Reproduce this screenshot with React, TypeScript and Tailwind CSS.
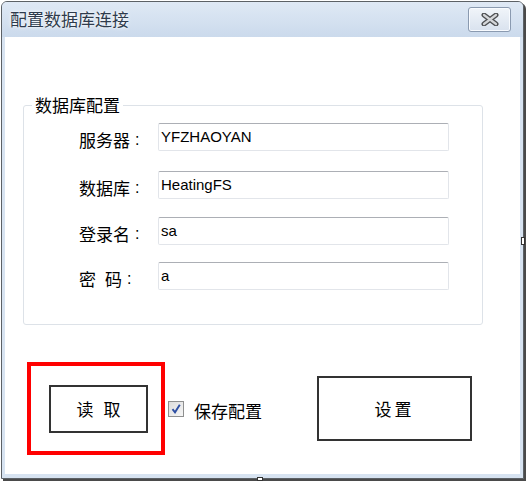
import React from "react";

const cjk = { fontFamily: '"Noto Sans CJK SC", "Microsoft YaHei", sans-serif' };
const latin = { fontFamily: '"Liberation Sans", Arial, sans-serif' };

function Colon() {
  return (
    <span className="ml-[5px] text-[16px]" style={latin}>
      :
    </span>
  );
}

function Field({ label, value, mt }: { label: React.ReactNode; value: string; mt: string }) {
  return (
    <div className={`flex items-center h-[28px] ${mt}`}>
      <div className="w-[79px] ml-[55px] flex items-center text-[17px] leading-none text-black pt-[5px]" style={cjk}>
        {label}
      </div>
      <div
        className="w-[291px] h-[28px] rounded-[2px] border border-[#e2e5ea] border-t-[#acafb5] bg-white flex items-center pl-[2px] text-[15px] text-black"
        style={latin}
      >
        {value}
      </div>
    </div>
  );
}

export default function App() {
  return (
    <div className="w-[529px] h-[484px] bg-white relative overflow-hidden">
      <div className="ml-[1px] mt-[1px] w-[523px] h-[478px] border border-[#5c6166] rounded-t-[6px] shadow-[2px_2px_0_#4a4a4a] flex flex-col bg-[#d7e3f1]">
        {/* Title bar */}
        <div className="h-[35px] rounded-t-[5px] bg-gradient-to-b from-[#dfe9f5] to-[#cbdaec] flex items-start justify-between pl-[8px] pr-[12px]">
          <div
            className="mt-[7px] text-[17px] leading-[20px] text-[#2e3b4c]"
            style={{ ...cjk, textShadow: "0 0 4px #ffffff, 0 0 2px #ffffff" }}
          >
            配置数据库连接
          </div>
          <div className="mt-[5px] w-[43px] h-[25px] rounded-[3px] border border-[#8a9ab0] bg-gradient-to-b from-[#f1f5fa] to-[#d9e2ee] flex items-center justify-center shadow-[inset_0_0_0_1px_#f8fbff]">
            <svg width="18" height="13" viewBox="0 0 18 13">
              <path d="M3 2 L15 11 M15 2 L3 11" stroke="#4d4f52" strokeWidth="5" strokeLinecap="round" />
              <path d="M3 2 L15 11 M15 2 L3 11" stroke="#d4d6d9" strokeWidth="2.2" strokeLinecap="round" />
            </svg>
          </div>
        </div>
        {/* Client frame */}
        <div className="flex-1 px-[3px] pb-[4px] flex">
          <div className="flex-1 bg-white pt-[68px] flex flex-col">
            {/* Group box */}
            <div className="relative ml-[18px] w-[460px] h-[220px] border border-[#dde2e8] rounded-[3px] pt-[17px]">
              <div
                className="absolute left-[8px] top-[-11px] bg-white px-[3px] text-[17px] leading-[20px] text-black"
                style={cjk}
              >
                数据库配置
              </div>
              <Field label={<><span>服务器</span><Colon /></>} value="YFZHAOYAN" mt="mt-0" />
              <Field label={<><span>数据库</span><Colon /></>} value="HeatingFS" mt="mt-[20px]" />
              <Field label={<><span>登录名</span><Colon /></>} value="sa" mt="mt-[18px]" />
              <Field
                label={<><span>密</span><span className="ml-[9px]">码</span><Colon /></>}
                value="a"
                mt="mt-[17px]"
              />
            </div>
            {/* Bottom row */}
            <div className="mt-[37px] flex items-center">
              <div className="ml-[22px] w-[138px] h-[93px] border-[4px] border-[#ff0000] pl-[18px] pt-[19px]">
                <div
                  className="w-[99px] h-[48px] border-2 border-[#333333] bg-white flex items-center justify-center gap-[10px] text-[17px] text-black"
                  style={cjk}
                >
                  <span>读</span>
                  <span>取</span>
                </div>
              </div>
              <div className="ml-[3px] flex items-center">
                <div className="w-[16px] h-[16px] border border-[#8e8f8f] bg-gradient-to-br from-[#dcdcdc] to-[#f6f6f6] flex items-center justify-center">
                  <svg width="12" height="12" viewBox="0 0 12 12">
                    <path d="M2.5 6.2 L5 9.3 L9.8 1.8" stroke="#2d4ea3" strokeWidth="1.9" fill="none" strokeLinejoin="miter" />
                  </svg>
                </div>
                <div className="ml-[10px] text-[17px] leading-none text-black pt-[4px]" style={cjk}>
                  保存配置
                </div>
              </div>
              <div
                className="ml-[55px] w-[155px] h-[65px] border-2 border-[#333333] bg-white flex items-center justify-center text-[17px] tracking-[3px] text-black"
                style={cjk}
              >
                设置
              </div>
            </div>
          </div>
        </div>
      </div>
      {/* selection handles */}
      <div className="absolute left-[521px] top-[237px] w-[4px] h-[8px] border border-[#333] bg-white" />
      <div className="absolute left-[257px] top-[477px] w-[6px] h-[4px] border border-[#333] bg-white" />
    </div>
  );
}
